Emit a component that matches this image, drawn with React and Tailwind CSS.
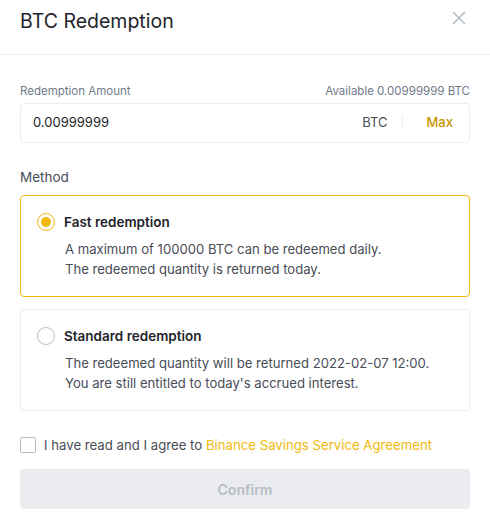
import React from 'react';

const Option = ({ active, title, lines }) => (
  <div
    className={`rounded-[4px] border h-[102px] px-4 pt-[16px] ${
      active ? 'border-[#f0b90b]' : 'border-[#eaecef]'
    }`}
  >
    <div className="flex items-center gap-[9px]">
      {active ? (
        <span className="w-[18px] h-[18px] rounded-full border-[1.5px] border-[#f0b90b] flex items-center justify-center">
          <span className="w-[10px] h-[10px] rounded-full bg-[#f0b90b]" />
        </span>
      ) : (
        <span className="w-[18px] h-[18px] rounded-full border border-[#b7bdc6]" />
      )}
      <span className="text-[13.5px] font-semibold text-[#1e2329]">{title}</span>
    </div>
    <div className="pl-[28px] mt-[7px] text-[13.1px] leading-[20px] text-[#474d57]">
      {lines.map((l) => (
        <div key={l}>{l}</div>
      ))}
    </div>
  </div>
);

export default function App() {
  return (
    <div
      className="w-[490px] h-[522px] bg-white"
      style={{ fontFamily: 'Inter, "Noto Sans", sans-serif' }}
    >
      {/* Header */}
      <div className="h-[55px] border-b border-[#eaecef] flex items-start justify-between px-5 pt-[7px]">
        <h1 className="text-[19.5px] text-[#1e2329] leading-[28px]">BTC Redemption</h1>
        <button className="mt-[3px] mr-[3px] text-[#b7bdc6]">
          <svg width="16" height="16" viewBox="0 0 16 16" fill="none" stroke="currentColor" strokeWidth="1.6">
            <path d="M2 2l12 12M14 2L2 14" />
          </svg>
        </button>
      </div>

      <div className="px-5">
        {/* Amount */}
        <div className="flex items-center justify-between mt-[28px] text-[11.5px] text-[#707a8a] leading-[16px]">
          <span>Redemption Amount</span>
          <span>Available 0.00999999 BTC</span>
        </div>
        <div className="mt-[4px] h-[40px] rounded-[4px] border border-[#eaecef] flex items-center pl-[12px] pr-[16px] text-[13px]">
          <span className="flex-1 text-[#1e2329]">0.00999999</span>
          <span className="text-[#474d57]">BTC</span>
          <span className="w-px h-[14px] bg-[#eaecef] ml-[14px]" />
          <span className="ml-[24px] text-[#c99400] font-medium">Max</span>
        </div>

        {/* Method */}
        <div className="mt-[24px] text-[13.5px] text-[#474d57] leading-[20px]">Method</div>
        <div className="mt-[8px]">
          <Option
            active
            title="Fast redemption"
            lines={[
              'A maximum of 100000 BTC can be redeemed daily.',
              'The redeemed quantity is returned today.',
            ]}
          />
        </div>
        <div className="mt-[12px]">
          <Option
            title="Standard redemption"
            lines={[
              'The redeemed quantity will be returned 2022-02-07 12:00.',
              "You are still entitled to today's accrued interest.",
            ]}
          />
        </div>

        {/* Agreement */}
        <div className="mt-[24px] flex items-center gap-[8px] text-[13.2px] leading-[20px]">
          <span className="w-[16px] h-[16px] rounded-[2px] border border-[#b7bdc6]" />
          <span className="text-[#474d57]">
            I have read and I agree to{' '}
            <span className="text-[#f0b90b]">Binance Savings Service Agreement</span>
          </span>
        </div>

        <button className="mt-[14px] w-full h-[40px] rounded-[4px] bg-[#eaecef] text-[#b7bdc6] text-[14px] font-semibold">
          Confirm
        </button>
      </div>
    </div>
  );
}
